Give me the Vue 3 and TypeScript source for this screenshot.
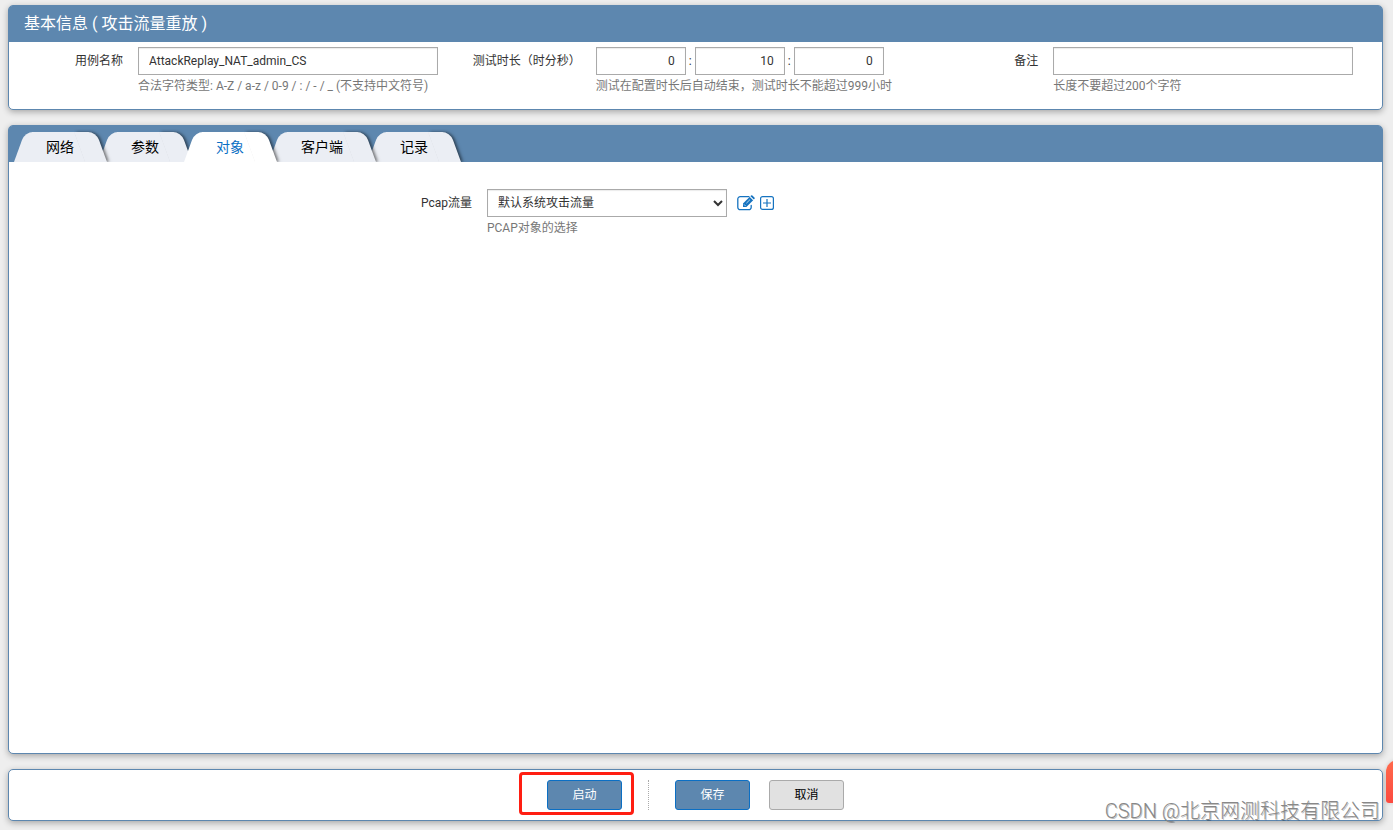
<script setup lang="ts">
import { ref } from 'vue'

const tabs: string[] = ['网络', '参数', '对象', '客户端', '记录']
const active = ref(2)

const caseName = ref('AttackReplay_NAT_admin_CS')
const duration = ref([
  { label: '时', value: '0' },
  { label: '分', value: '10' },
  { label: '秒', value: '0' },
])
const remark = ref('')
const pcap = ref('default')
</script>

<template>
  <main class="page">
    <section class="panel">
      <h1 class="panel-head">基本信息 ( 攻击流量重放 )</h1>
      <div class="basic">
        <div class="field">
          <label for="case-name">用例名称</label>
          <div class="control">
            <input id="case-name" v-model="caseName" class="box wide" type="text" />
            <p class="hint">合法字符类型: A-Z / a-z / 0-9 / : / - / _ (不支持中文符号)</p>
          </div>
        </div>
        <div class="field">
          <label for="duration-0">测试时长（时分秒）</label>
          <div class="control">
            <div class="times">
              <template v-for="(part, i) in duration" :key="part.label">
                <span v-if="i > 0" class="colon">:</span>
                <input
                  :id="`duration-${i}`"
                  v-model="part.value"
                  class="box time"
                  type="text"
                  :aria-label="part.label"
                />
              </template>
            </div>
            <p class="hint">测试在配置时长后自动结束，测试时长不能超过999小时</p>
          </div>
        </div>
        <div class="field">
          <label for="remark">备注</label>
          <div class="control">
            <input id="remark" v-model="remark" class="box wide" type="text" />
            <p class="hint">长度不要超过200个字符</p>
          </div>
        </div>
      </div>
    </section>

    <section class="panel main">
      <div class="tabs" role="tablist">
        <button
          v-for="(tab, i) in tabs"
          :key="tab"
          type="button"
          role="tab"
          class="tab"
          :class="{ active: i === active }"
          :aria-selected="i === active"
          :style="{ zIndex: i === active ? 10 : tabs.length - i }"
          @click="active = i"
        >
          {{ tab }}
        </button>
      </div>
      <div class="pcap">
        <label for="pcap">Pcap流量</label>
        <div>
          <div class="pcap-line">
            <select id="pcap" v-model="pcap" class="box select">
              <option value="default">默认系统攻击流量</option>
            </select>
            <button type="button" class="icon" aria-label="编辑">
              <svg width="18" height="16" viewBox="0 0 18 16" fill="none">
                <path
                  d="M12 1.7H3.2A2.4 2.4 0 0 0 .8 4.1v8.2a2.4 2.4 0 0 0 2.4 2.4h8.6a2.4 2.4 0 0 0 2.4-2.4V10.4"
                  stroke="#1673c0"
                  stroke-width="1.3"
                  stroke-linecap="round"
                />
                <path d="M6 12V8.6L12.8 1.8l3.4 3.4L9.4 12z" fill="#1673c0" />
                <path d="M13.4 1.2l.6-.6a1 1 0 0 1 1.4 0l2 2a1 1 0 0 1 0 1.4l-.6.6z" fill="#1673c0" />
                <path d="M7 9.4l1.7 1.7M9.4 8.2l3.7-3.7M13 1.6l3.4 3.4" stroke="#fff" stroke-width=".7" />
              </svg>
            </button>
            <button type="button" class="icon" aria-label="新增">
              <svg width="14" height="14" viewBox="0 0 14 14" fill="none" stroke="#1673c0">
                <rect x=".6" y=".6" width="12.8" height="12.8" rx="2" stroke-width="1.2" />
                <path d="M3 7h8M7 3v8" stroke-width="1.2" />
              </svg>
            </button>
          </div>
          <p class="hint">PCAP对象的选择</p>
        </div>
      </div>
    </section>

    <footer class="panel actions">
      <span class="marked"><button type="button" class="btn primary">启动</button></span>
      <span class="divider"></span>
      <button type="button" class="btn primary">保存</button>
      <button type="button" class="btn cancel">取消</button>
    </footer>

    <div class="side-float"></div>
    <div class="watermark">CSDN @北京网测科技有限公司</div>
  </main>
</template>

<style>
body {
  background: #eee;
}
</style>

<style scoped>
.page {
  position: relative;
  box-sizing: border-box;
  min-height: 100vh;
  padding: 5px 10px 9px 8px;
  display: flex;
  flex-direction: column;
  gap: 15px;
  overflow: hidden;
  font: 12px/20px Roboto, 'Noto Sans CJK SC', sans-serif;
  color: #333;
}
.panel {
  background: #fff;
  border: 1px solid #5d87af;
  border-radius: 5px;
  box-shadow: 0 2px 6px rgba(0, 0, 0, 0.3);
}
.panel-head {
  margin: 0;
  padding: 0 15px;
  background: #5d87af;
  border-radius: 3px 3px 0 0;
  color: #fff;
  font-size: 16px;
  font-weight: 400;
  line-height: 36px;
}
.basic {
  display: grid;
  grid-template-columns: repeat(3, 1fr);
  padding: 5px 0 13px;
}
.field {
  display: flex;
  gap: 15px;
  min-width: 0;
}
.field label {
  flex: none;
  width: 114px;
  text-align: right;
  line-height: 28px;
  white-space: nowrap;
}
.control {
  flex: 1;
  min-width: 0;
}
.box {
  display: block;
  box-sizing: border-box;
  height: 28px;
  border: 1px solid #aaa;
  border-radius: 0;
  background: #fff;
  box-shadow: inset 0 1px 1px rgba(0, 0, 0, 0.08);
  color: #333;
  font: inherit;
  outline: none;
}
.wide {
  width: 300px;
  max-width: 100%;
  padding: 0 10px;
}
.times {
  display: flex;
}
.time {
  width: 90px;
  padding: 0 10px;
  text-align: right;
}
.colon {
  width: 9px;
  text-align: center;
  line-height: 28px;
}
.hint {
  margin: 0;
  padding-top: 1px;
  color: #777;
  white-space: nowrap;
}
.main {
  flex: 1;
}
.tabs {
  display: flex;
  padding: 6px 5px 0;
  background: #5d87af;
  border-radius: 3px 3px 0 0;
}
.tab {
  --fill: #ebeef4;
  position: relative;
  height: 30px;
  padding: 0 33px 0 32px;
  border: 0;
  background: linear-gradient(var(--fill), var(--fill)) center / calc(100% - 36px) 100% no-repeat;
  color: #000;
  font: 14px/30px Roboto, 'Noto Sans CJK SC', sans-serif;
  cursor: pointer;
}
.tab + .tab {
  margin-left: -8px;
}
.tab::before,
.tab::after {
  content: '';
  position: absolute;
  z-index: -1;
  top: 0;
  bottom: 0;
  background: var(--fill);
}
.tab::before {
  left: 0;
  width: 30px;
  border-radius: 8px 0 0 0;
  transform: skewX(-20deg);
  transform-origin: left bottom;
}
.tab::after {
  right: 0;
  width: 22px;
  border-radius: 0 8px 0 0;
  box-shadow: 2px 0 3px rgba(0, 0, 0, 0.5);
  transform: skewX(20deg);
  transform-origin: right bottom;
  clip-path: inset(-3px -8px 0 0);
}
.active {
  --fill: #fff;
  color: #0b6fc4;
}
.pcap {
  display: flex;
  gap: 15px;
  padding: 27px 0 0 30%;
}
.pcap label {
  line-height: 28px;
}
.pcap-line {
  display: flex;
  align-items: center;
}
.select {
  width: 240px;
  padding: 0 0 0 6px;
}
.icon {
  display: flex;
  margin-left: 10px;
  padding: 0;
  border: 0;
  background: none;
  cursor: pointer;
}
.icon + .icon {
  margin-left: 5px;
}
.actions {
  display: flex;
  justify-content: center;
  align-items: center;
  padding: 10px 0;
}
.btn {
  display: block;
  width: 75px;
  height: 30px;
  padding: 0;
  border: 1px solid #0b6fc4;
  border-radius: 3px;
  font: inherit;
  cursor: pointer;
}
.primary {
  background: #5d87af;
  color: #fff;
}
.cancel {
  margin-left: 19px;
  background: #e1e1e1;
  border-color: #aaa;
  color: #000;
}
.marked {
  position: relative;
}
.marked::after {
  content: '';
  position: absolute;
  inset: -8px -12px -5px -28px;
  border: 3px solid #ff1e12;
  border-radius: 4px;
  pointer-events: none;
}
.divider {
  height: 30px;
  margin: 0 26px;
  border-left: 1px dotted #aaa;
}
.side-float {
  position: absolute;
  right: -33px;
  bottom: 27px;
  width: 40px;
  height: 43px;
  border-radius: 12px 0 0 3px;
  background: linear-gradient(#ff6a4c, #fc4a40);
  box-shadow: 0 0 4px rgba(0, 0, 0, 0.15);
}
.watermark {
  position: absolute;
  right: 13px;
  bottom: 4px;
  color: #888;
  font-size: 20px;
  font-weight: 300;
  line-height: 30px;
  text-shadow: 1px 1px 0 rgba(0, 0, 0, 0.25);
  white-space: nowrap;
  pointer-events: none;
}
</style>
